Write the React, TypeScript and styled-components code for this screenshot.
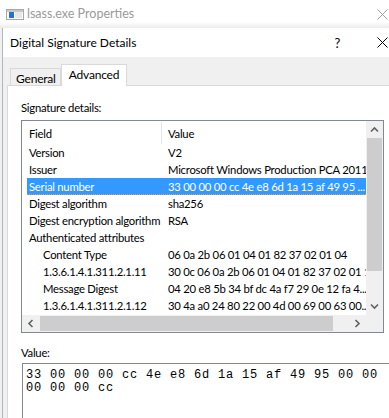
import React from 'react';
import styled, { createGlobalStyle } from 'styled-components';

const GlobalStyle = createGlobalStyle`
	html, body {
		margin: 0;
		padding: 0;
		background: #fff;
	}
	body {
		font-family: 'Segoe UI', Lato, 'Noto Sans', sans-serif;
		font-size: 11.3px;
		letter-spacing: -0.25px;
		color: #000;
	}
`;

const Page = styled.div`
	width: 389px;
	height: 418px;
	overflow: hidden;
	display: flex;
	flex-direction: column;
	background: #f0f0f0;
`;

const OuterBar = styled.div`
	height: 28px;
	flex: none;
	display: flex;
	align-items: center;
	padding-left: 6px;
	background: linear-gradient(to bottom, #fff 0, #fff 22px, #ececec 28px);
`;

const Title = styled.span<{ $inactive?: boolean }>`
	font-size: ${p => (p.$inactive ? '12.5px' : '12px')};
	letter-spacing: 0;
	line-height: 16px;
	margin-left: ${p => (p.$inactive ? '3px' : '0')};
	color: ${p => (p.$inactive ? '#9a9a9a' : '#000')};
	white-space: nowrap;
`;

const Spacer = styled.div`
	flex: 1;
`;

const CloseGlyph = styled.div`
	width: 16px;
	display: flex;
	justify-content: center;
	margin-right: -1px;
`;

const Dialog = styled.div`
	flex: 1;
	margin-left: 2px;
	border-left: 1px solid #aeb7c2;
	display: flex;
	flex-direction: column;
	background: #f0f0f0;
`;

const DialogTitle = styled.div`
	height: 29px;
	flex: none;
	display: flex;
	align-items: center;
	padding-left: 7px;
	background: #fff;
`;

const Help = styled.span`
	font-size: 13px;
	margin-right: 34px;
`;

const Body = styled.div`
	flex: 1;
	display: flex;
	flex-direction: column;
	padding: 7px 0 0 4px;
`;

const TabStrip = styled.div`
	display: flex;
	align-items: flex-end;
	padding-left: 3px;
	position: relative;
	z-index: 1;
`;

const Tab = styled.div<{ $active?: boolean }>`
	height: ${p => (p.$active ? '22px' : '17px')};
	padding: ${p => (p.$active ? '0 7px 2px 7px' : '2px 4px 0 5px')};
	box-sizing: border-box;
	display: flex;
	align-items: center;
	border: 1px solid #d9d9d9;
	border-bottom: none;
	background: ${p => (p.$active ? '#fff' : '#f0f0f0')};
	margin-bottom: ${p => (p.$active ? '-1px' : '0')};
	font-size: 12px;
	letter-spacing: -0.2px;
	white-space: nowrap;
`;

const Panel = styled.div`
	flex: 1;
	background: #fff;
	border: 1px solid #d9d9d9;
	border-right: none;
	border-bottom: none;
	padding: 14px 0 0 13px;
	display: flex;
	flex-direction: column;
`;

const Label = styled.div`
	line-height: 16px;
	height: 16px;
`;

const ListBox = styled.div`
	margin-top: 4px;
	width: 363px;
	height: 213px;
	box-sizing: border-box;
	border: 1px solid #828790;
	display: grid;
	grid-template-columns: 1fr 17px;
	grid-template-rows: 1fr 17px;
`;

const ListContent = styled.div`
	overflow: hidden;
	display: flex;
	flex-direction: column;
`;

const Header = styled.div`
	height: 23px;
	flex: none;
	display: grid;
	grid-template-columns: 140px 1fr;
	align-items: center;
	padding-top: 1px;
	box-sizing: border-box;
`;

const HeaderCell = styled.div<{ $sep?: boolean }>`
	padding-left: ${p => (p.$sep ? '6px' : '7px')};
	height: 100%;
	display: flex;
	align-items: center;
	border-left: ${p => (p.$sep ? '1px solid #e5e5e5' : 'none')};
	box-sizing: border-box;
	margin-left: ${p => (p.$sep ? '-1px' : '0')};
`;

const Row = styled.div<{ $selected?: boolean }>`
	height: 17px;
	flex: none;
	box-sizing: border-box;
	margin-left: 5px;
	display: grid;
	grid-template-columns: 135px 1fr;
	align-items: center;
	white-space: nowrap;
	background: ${p => (p.$selected ? '#3399ff' : 'transparent')};
	color: ${p => (p.$selected ? '#fff' : '#000')};
	border-bottom: 1px dotted ${p => (p.$selected ? '#e89a58' : 'transparent')};
	padding-top: 1px;
`;

const FieldCell = styled.div<{ $indent?: boolean }>`
	padding-left: ${p => (p.$indent ? '16px' : '2px')};
	overflow: hidden;
`;

const ValueCell = styled.div`
	padding-left: 6px;
	overflow: hidden;
`;

const ScrollTrack = styled.div<{ $horizontal?: boolean }>`
	background: #f0f0f0;
	display: flex;
	flex-direction: ${p => (p.$horizontal ? 'row' : 'column')};
`;

const ScrollArrow = styled.div`
	width: 17px;
	height: 17px;
	flex: none;
	display: flex;
	align-items: center;
	justify-content: center;
`;

const Thumb = styled.div<{ $horizontal?: boolean }>`
	background: #cdcdcd;
	${p =>
		p.$horizontal
			? 'margin: 1px 0; width: 293px; margin-left: 1px;'
			: 'margin: 0 1px; height: 133px;'}
`;

const Corner = styled.div`
	background: #f0f0f0;
`;

const ValueLabel = styled(Label)`
	margin-top: 12px;
`;

const ValueBox = styled.div`
	margin-top: 2px;
	margin-left: 1px;
	flex: 1;
	border: 1px solid #828790;
	border-right: none;
	border-bottom: none;
	padding: 5px 3px 0 3px;
	font-family: 'Liberation Mono', 'Courier New', monospace;
	font-size: 12px;
	letter-spacing: 0.8px;
	line-height: 13px;
	white-space: pre;
`;

const Chevron: React.FC<{ dir: 'up' | 'down' | 'left' | 'right' }> = ({ dir }) => {
	const rot = { up: 0, right: 90, down: 180, left: 270 }[dir];
	return (
		<svg width="9" height="9" viewBox="0 0 9 9" style={{ transform: `rotate(${rot}deg)` }}>
			<path d="M1 6.5 L4.5 3 L8 6.5" fill="none" stroke="#606060" strokeWidth="1.6" />
		</svg>
	);
};

const XIcon: React.FC<{ color: string }> = ({ color }) => (
	<svg width="11" height="11" viewBox="0 0 11 11">
		<path d="M0.5 0.5 L10.5 10.5 M10.5 0.5 L0.5 10.5" stroke={color} strokeWidth="1" />
	</svg>
);

const AppIcon = () => (
	<svg width="18" height="11" viewBox="0 0 18 11">
		<rect x="0.5" y="0.5" width="17" height="10" fill="#fff" stroke="#a8a8a8" />
		<rect x="1" y="1" width="16" height="2" fill="#c8c8c8" />
		<rect x="3" y="3" width="5" height="6" fill="#1f74d6" />
		<rect x="9" y="3" width="7" height="6" fill="#e8e8e8" />
	</svg>
);

type Item = { field: string; value: string; indent?: boolean; selected?: boolean };

const items: Item[] = [
	{ field: 'Version', value: 'V2' },
	{ field: 'Issuer', value: 'Microsoft Windows Production PCA 2011...' },
	{ field: 'Serial number', value: '33 00 00 00 cc 4e e8 6d 1a 15 af 49 95 ...', selected: true },
	{ field: 'Digest algorithm', value: 'sha256' },
	{ field: 'Digest encryption algorithm', value: 'RSA' },
	{ field: 'Authenticated attributes', value: '' },
	{ field: 'Content Type', value: '06 0a 2b 06 01 04 01 82 37 02 01 04', indent: true },
	{ field: '1.3.6.1.4.1.311.2.1.11', value: '30 0c 06 0a 2b 06 01 04 01 82 37 02 01 1...', indent: true },
	{ field: 'Message Digest', value: '04 20 e8 5b 34 bf dc 4a f7 29 0e 12 fa 4...', indent: true },
	{ field: '1.3.6.1.4.1.311.2.1.12', value: '30 4a a0 24 80 22 00 4d 00 69 00 63 00...', indent: true },
];

const App: React.FC = () => {
	return (
		<Page>
			<GlobalStyle />
			<OuterBar>
				<AppIcon />
				<Title $inactive>lsass.exe Properties</Title>
				<Spacer />
				<CloseGlyph>
					<XIcon color="#a0a0a0" />
				</CloseGlyph>
			</OuterBar>
			<Dialog>
				<DialogTitle>
					<Title>Digital Signature Details</Title>
					<Spacer />
					<Help>?</Help>
					<CloseGlyph>
						<XIcon color="#000" />
					</CloseGlyph>
				</DialogTitle>
				<Body>
					<TabStrip>
						<Tab>General</Tab>
						<Tab $active>Advanced</Tab>
					</TabStrip>
					<Panel>
						<Label>Signature details:</Label>
						<ListBox>
							<ListContent>
								<Header>
									<HeaderCell>Field</HeaderCell>
									<HeaderCell $sep>Value</HeaderCell>
								</Header>
								{items.map(it => (
									<Row key={it.field} $selected={it.selected}>
										<FieldCell $indent={it.indent}>{it.field}</FieldCell>
										<ValueCell>{it.value}</ValueCell>
									</Row>
								))}
							</ListContent>
							<ScrollTrack>
								<ScrollArrow>
									<Chevron dir="up" />
								</ScrollArrow>
								<Thumb />
								<Spacer />
								<ScrollArrow>
									<Chevron dir="down" />
								</ScrollArrow>
							</ScrollTrack>
							<ScrollTrack $horizontal>
								<ScrollArrow>
									<Chevron dir="left" />
								</ScrollArrow>
								<Thumb $horizontal />
								<Spacer />
								<ScrollArrow>
									<Chevron dir="right" />
								</ScrollArrow>
							</ScrollTrack>
							<Corner />
						</ListBox>
						<ValueLabel>Value:</ValueLabel>
						<ValueBox>{'33 00 00 00 cc 4e e8 6d 1a 15 af 49 95 00 00\n00 00 00 cc'}</ValueBox>
					</Panel>
				</Body>
			</Dialog>
		</Page>
	);
};

export default App;
